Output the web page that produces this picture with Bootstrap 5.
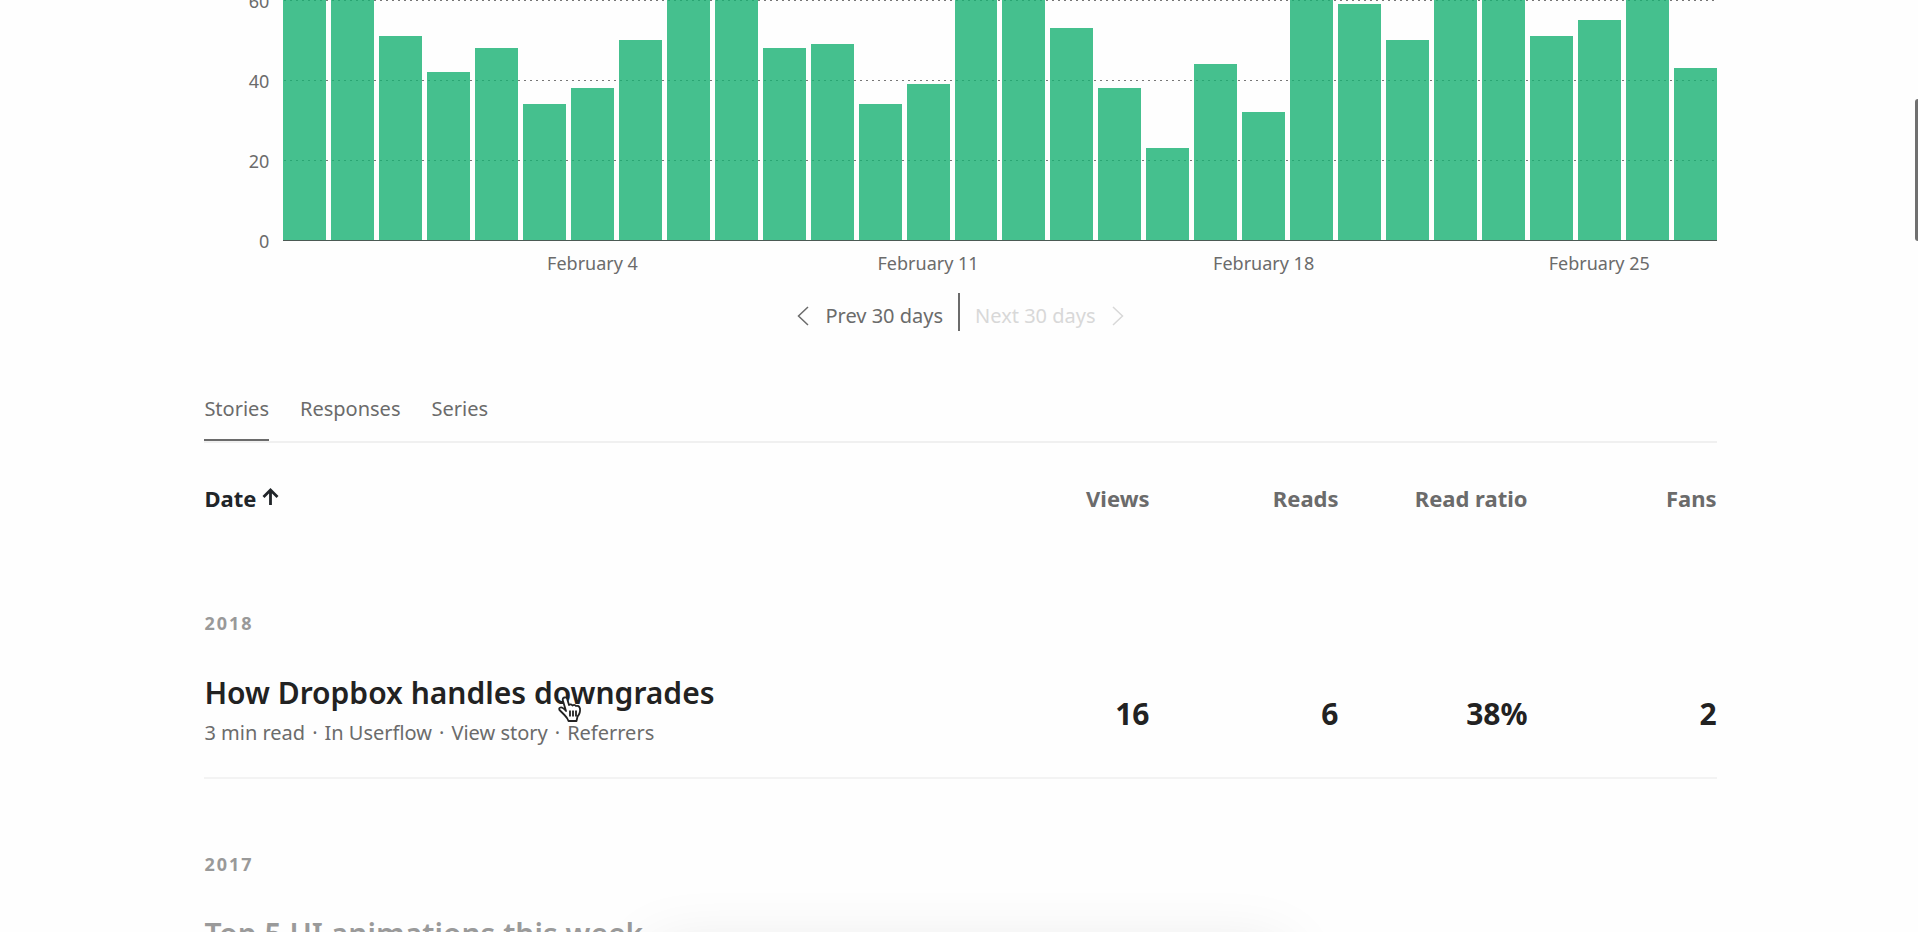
<!DOCTYPE html>
<html lang="en">
<head>
<meta charset="utf-8">
<meta name="viewport" content="width=device-width, initial-scale=1">
<title>Stats</title>
<link href="https://cdn.jsdelivr.net/npm/bootstrap@5.3.0/dist/css/bootstrap.min.css" rel="stylesheet">
<style>
  body { font-family: "Noto Sans", "Open Sans", sans-serif; color: #222; background: #fefefe; }
  button, a { color: inherit; font: inherit; text-decoration: none; }
  .stats { width: 79%; padding-left: 3px; }
  .soft { color: #6b6b6b; }

  /* chart */
  .chart { display: grid; grid-template-columns: 65px 1fr; column-gap: 14px; font-size: 18px; line-height: 24px; }
  .plot { height: 240px; border-bottom: 1px solid #4b5a54; box-sizing: content-box; }
  .scale { height: 240px; }
  .scale span { height: 80px; flex: none; margin-top: -11px; margin-bottom: 11px; }
  .lines div { height: 80px; flex: none; background: repeating-linear-gradient(90deg, transparent 0 1px, #777 1px 3px, transparent 3px 6px) top / 100% 1px no-repeat; }
  .months, .bars { display: grid; grid-template-columns: repeat(30, 1fr); column-gap: 5px; }
  .bars { align-items: end; }
  .bars i { background: rgba(22, 176, 114, .8); }
  .months { grid-column: 2; padding-top: 10px; text-align: center; white-space: nowrap; }
  .months span:nth-child(1) { grid-column: 6 / span 3; }
  .months span:nth-child(2) { grid-column: 13 / span 3; }
  .months span:nth-child(3) { grid-column: 20 / span 3; }
  .months span:nth-child(4) { grid-column: 27 / span 3; }

  .pager { font-size: 20px; line-height: 30px; margin-top: 18px; }
  .pager button { padding: 8px 15px 0; border: 0; background: none; }
  .pager button:disabled { color: #d8d8d8; }
  .pager .vr { width: 2px; opacity: 1; background: #6b6b6b; }

  .tabs { margin-top: 64px; gap: 31px; font-size: 20px; line-height: 28px; border-bottom: 2px solid #f0f0f0; }
  .tabs a { padding-bottom: 16px; border-bottom: 2px solid transparent; }
  .tabs .active { border-color: #6b6b6b; }

  /* stories */
  .stories { table-layout: fixed; margin-top: 37px; }
  .stories th, .stories td { padding: 0; text-align: right; }
  .stories th:first-child { width: 50%; text-align: left; }
  .stories thead { font-size: 22px; line-height: 36px; }
  .stories thead button { border: 0; padding: 0; background: none; font-weight: 700; }
  .stories thead svg { vertical-align: baseline; }
  .stories .year th { padding-top: 93px; font-size: 18px; line-height: 28px; letter-spacing: 2px; color: #999; }
  .stories .year ~ .year th { padding-top: 71px; }
  .stories .story > * { padding: 36px 0 24px; border-bottom: 2px solid #f3f3f3; font-size: 30px; font-weight: 700; }
  .title { font-size: 30px; line-height: 40px; font-weight: 600; }
  .meta { gap: 7px; font-size: 20px; line-height: 40px; font-weight: 400; }
  .faded { opacity: .45; }

  .pointer { left: 354px; top: 23px; }
  .thumb { right: 0; top: 99px; width: 3px; height: 142px; border-radius: 4px 0 0 4px; background: #707070; }
  .toast-shade { top: 100%; left: 34%; right: 33%; height: 80px; margin-top: 16px; box-shadow: 0 0 64px rgba(0, 0, 0, .1); }
</style>
</head>
<body class="vh-100 overflow-hidden position-relative">
<main class="stats mx-auto">
  <section class="chart" aria-label="Views per day">
    <div class="scale d-flex flex-column text-end soft"><span>60</span><span>40</span><span>20</span><span>0</span></div>
    <div class="plot position-relative overflow-hidden">
      <div class="lines d-flex flex-column h-100"><div></div><div></div><div></div></div>
      <div class="bars position-absolute top-0 start-0 w-100 h-100" id="bars"></div>
    </div>
    <div class="months soft"><span>February 4</span><span>February 11</span><span>February 18</span><span>February 25</span></div>
  </section>

  <nav class="pager d-flex justify-content-center soft" aria-label="Period">
    <button type="button" class="d-flex align-items-center gap-3"><svg width="12" height="20" viewBox="0 0 12 20" fill="none" stroke="currentColor" stroke-width="1.5"><path d="M11 1 1.500 10 11 19"/></svg>Prev 30 days</button>
    <span class="vr"></span>
    <button type="button" class="d-flex align-items-center gap-3" disabled>Next 30 days<svg width="12" height="20" viewBox="0 0 12 20" fill="none" stroke="currentColor" stroke-width="1.5"><path d="m1 1 9.500 9L1 19"/></svg></button>
  </nav>

  <nav class="tabs d-flex soft" aria-label="Content type">
    <a href="#" class="active" aria-current="page">Stories</a><a href="#">Responses</a><a href="#">Series</a>
  </nav>

  <table class="stories w-100">
    <thead>
      <tr class="soft">
        <th scope="col"><button type="button" class="text-dark">Date <svg width="17" height="20" viewBox="0 0 17 20" fill="none" stroke="currentColor" stroke-width="2.800"><path d="M8.500 18V3M1.500 10l7-7 7 7"/></svg></button></th>
        <th scope="col"><button type="button">Views</button></th>
        <th scope="col"><button type="button">Reads</button></th>
        <th scope="col"><button type="button">Read ratio</button></th>
        <th scope="col"><button type="button">Fans</button></th>
      </tr>
    </thead>
    <tbody>
      <tr class="year"><th colspan="5">2018</th></tr>
      <tr class="story">
        <th scope="row">
          <div class="title position-relative"><a href="#">How Dropbox handles downgrades</a>
            <svg class="pointer position-absolute" width="24" height="27" viewBox="0 0 24 27" fill="#fff" stroke="#222" stroke-width="1.800" stroke-linejoin="round"><path d="M8 15 5 5Q4 2 6.500 1.500T9.500 4l1.500 5q2-1.500 3.500.5 2-1.500 3.500.5 3-1 4 2.500.5 5-2.500 8l-1 4.500h-8q-1-3-4-6l-5-5q-1-2 1-2.500T8 15Z"/><path d="M12 14.500v6M15 14.500v6M18 14.500v6"/></svg>
          </div>
          <div class="meta d-flex soft"><span>3 min read</span><span>·</span><a href="#">In Userflow</a><span>·</span><a href="#">View story</a><span>·</span><a href="#">Referrers</a></div>
        </th>
        <td>16</td><td>6</td><td>38%</td><td>2</td>
      </tr>
      <tr class="year"><th colspan="5">2017</th></tr>
      <tr class="story">
        <th scope="row"><div class="title faded"><a href="#">Top 5 UI animations this week</a></div></th>
        <td></td><td></td><td></td><td></td>
      </tr>
    </tbody>
  </table>
</main>
<div class="toast-shade position-absolute"></div>
<div class="thumb position-absolute"></div>
<script src="https://cdn.jsdelivr.net/npm/bootstrap@5.3.0/dist/js/bootstrap.bundle.min.js"></script>
<script>
  const views = [65, 65, 51, 42, 48, 34, 38, 50, 65, 65, 48, 49, 34, 39, 65, 65, 53, 38, 23, 44, 32, 65, 59, 50, 65, 65, 51, 55, 65, 43];
  document.getElementById('bars').innerHTML = views.map(v => `<i style="height:${v / 60 * 100}%"></i>`).join('');
</script>
</body>
</html>
